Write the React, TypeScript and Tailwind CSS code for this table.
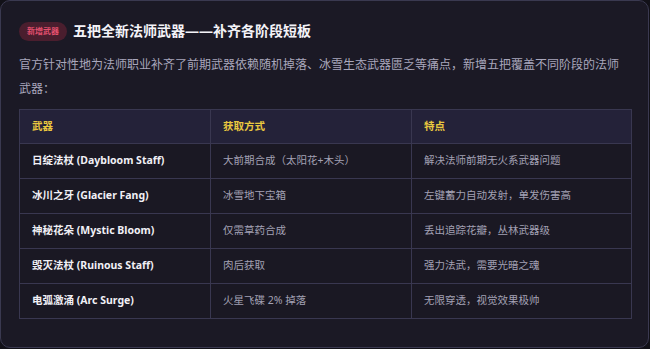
import React from "react";

const rows = [
  ["日绽法杖 (Daybloom Staff)", "大前期合成（太阳花+木头）", "解决法师前期无火系武器问题"],
  ["冰川之牙 (Glacier Fang)", "冰雪地下宝箱", "左键蓄力自动发射，单发伤害高"],
  ["神秘花朵 (Mystic Bloom)", "仅需草药合成", "丢出追踪花瓣，丛林武器级"],
  ["毁灭法杖 (Ruinous Staff)", "肉后获取", "强力法武，需要光暗之魂"],
  ["电弧激涌 (Arc Surge)", "火星飞碟 2% 掉落", "无限穿透，视觉效果极帅"],
];

export default function App() {
  return (
    <div
      className="w-[650px] h-[349px] bg-[#121118] overflow-hidden"
      style={{ fontFamily: '"Noto Sans", "Noto Sans CJK SC", sans-serif' }}
    >
      <div className="h-[348px] w-[649px] rounded-[10px] border border-[#3a3950] bg-[#1b1925] px-[18px] pt-[20px]">
        <div className="flex items-center gap-[6px]">
          <span className="flex h-[19px] items-center rounded-full bg-[#4a1e2e] px-[8px] text-[8px] font-bold text-[#e4506e]">
            新增武器
          </span>
          <span className="text-[14px] font-bold leading-[20px] text-[#f4f3f8]">
            五把全新法师武器——补齐各阶段短板
          </span>
        </div>
        <p className="mt-[12px] text-[12px] leading-[24px] text-[#a9a7bc]">
          官方针对性地为法师职业补齐了前期武器依赖随机掉落、冰雪生态武器匮乏等痛点，新增五把覆盖不同阶段的法师武器：
        </p>
        <table className="mt-[8px] w-[612px] table-fixed border-collapse border border-[#393750] text-[10.5px]">
          <colgroup>
            <col className="w-[191px]" />
            <col className="w-[201px]" />
            <col className="w-[220px]" />
          </colgroup>
          <thead>
            <tr className="h-[34px] bg-[#242239]">
              {["武器", "获取方式", "特点"].map((h) => (
                <th
                  key={h}
                  className="border border-[#393750] px-[12px] text-left font-bold text-[#e9c83f]"
                >
                  {h}
                </th>
              ))}
            </tr>
          </thead>
          <tbody>
            {rows.map((r) => (
              <tr key={r[0]} className="h-[35px] bg-[#1a1823]">
                <td className="border border-[#393750] px-[12px] font-bold text-[#f1f0f6]">{r[0]}</td>
                <td className="border border-[#393750] px-[12px] text-[#a3a1b4]">{r[1]}</td>
                <td className="border border-[#393750] px-[12px] text-[#a3a1b4]">{r[2]}</td>
              </tr>
            ))}
          </tbody>
        </table>
      </div>
    </div>
  );
}
